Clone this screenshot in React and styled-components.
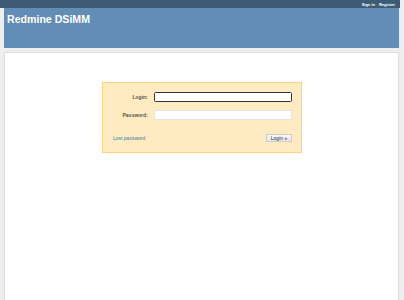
import React from 'react';
import styled, { createGlobalStyle } from 'styled-components';

const GlobalStyle = createGlobalStyle`
  html, body {
    margin: 0;
    padding: 0;
    background: #eeeeee;
    font-family: "Liberation Sans", Arial, sans-serif;
  }
`;

const Page = styled.div`
  width: 400px;
  height: 300px;
  display: flex;
  flex-direction: column;
  background: #eeeeee;
`;

const TopMenu = styled.div`
  height: 8px;
  background: #3e5b76;
  display: flex;
  justify-content: flex-end;
  align-items: center;
  gap: 4px;
  padding-right: 5px;
`;

const TopLink = styled.a`
  color: #fff;
  font-size: 4px;
  font-weight: bold;
  text-decoration: none;
`;

const Header = styled.div`
  height: 40px;
  margin: 0 1px 0 4px;
  background: #628db6;
  color: #fff;
  padding: 5px 3px 0;
  box-sizing: border-box;
`;

const Title = styled.h1`
  margin: 0;
  font-size: 10.6px;
  font-weight: bold;
`;

const Main = styled.div`
  flex: 1;
  margin: 4px 1px 0 4px;
  background: #fff;
  border: 1px solid #dddddd;
  border-bottom: none;
  display: flex;
  justify-content: center;
  padding-top: 29px;
`;

const LoginBox = styled.div`
  width: 200px;
  height: 71px;
  box-sizing: border-box;
  background: #ffebc1;
  border: 1.5px solid #fdd27a;
  padding: 9px 9px 0 10px;
  display: flex;
  flex-direction: column;
  align-self: flex-start;
  margin-left: 1px;
`;

const Row = styled.div`
  display: flex;
  align-items: center;
  gap: 6px;
  margin-bottom: ${p => p.$gap || 0}px;
`;

const Label = styled.label`
  width: 35px;
  text-align: right;
  font-size: 5px;
  font-weight: bold;
  color: #555;
`;

const Input = styled.div`
  width: 139px;
  height: 10px;
  box-sizing: border-box;
  background: #fff;
  border: ${p => (p.$focus ? '1px solid #333' : '1px solid #e4e4e4')};
  border-radius: ${p => (p.$focus ? '1.5px' : '0')};
`;

const Footer = styled.div`
  display: flex;
  justify-content: space-between;
  align-items: center;
  margin-top: 14px;
`;

const LostLink = styled.a`
  font-size: 5px;
  color: #3a7ca5;
  text-decoration: none;
`;

const Button = styled.div`
  width: 26px;
  height: 8px;
  box-sizing: border-box;
  border: 1px solid #ccc;
  background: linear-gradient(#f8f8f8, #e6e6e6);
  font-size: 5px;
  color: #333;
  display: flex;
  align-items: center;
  justify-content: center;
`;

export default function App() {
  return (
    <>
      <GlobalStyle />
      <Page>
        <TopMenu>
          <TopLink>Sign in</TopLink>
          <TopLink>Register</TopLink>
        </TopMenu>
        <Header>
          <Title>Redmine DSiMM</Title>
        </Header>
        <Main>
          <LoginBox>
            <Row $gap={8}>
              <Label>Login:</Label>
              <Input $focus />
            </Row>
            <Row>
              <Label>Password:</Label>
              <Input />
            </Row>
            <Footer>
              <LostLink>Lost password</LostLink>
              <Button>Login »</Button>
            </Footer>
          </LoginBox>
        </Main>
      </Page>
    </>
  );
}
